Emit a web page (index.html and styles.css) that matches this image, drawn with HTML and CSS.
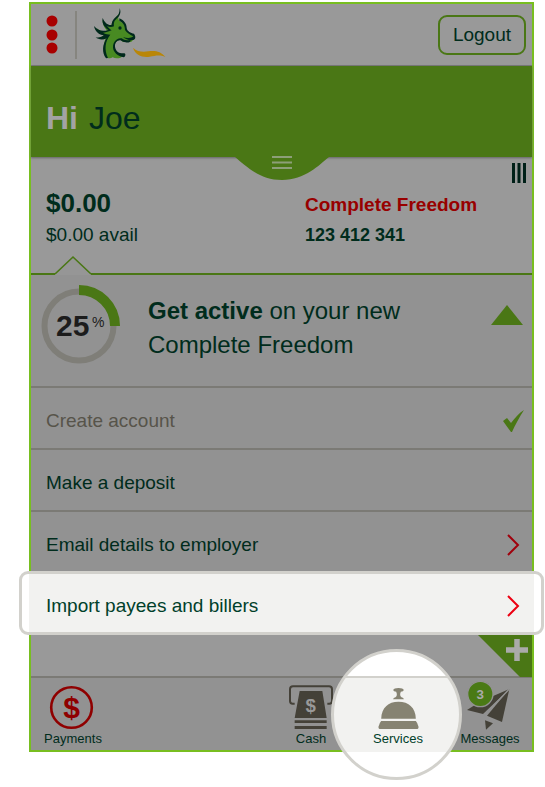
FILE: index.html
```html
<!DOCTYPE html>
<html lang="en">
<head>
    <meta charset="UTF-8">
    <meta name="viewport" content="width=device-width, initial-scale=1.0">
    <title>Complete Freedom</title>
    <link rel="stylesheet" href="styles.css">
</head>
<body>
    <div class="phone">
        <header class="topbar">
            <button class="menu" aria-label="Menu">
                <svg width="12" height="40" viewBox="0 0 12 40">
                    <circle cx="6" cy="6" r="5.5"/>
                    <circle cx="6" cy="20" r="5.5"/>
                    <circle cx="6" cy="33" r="5.5"/>
                </svg>
            </button>
            <svg class="logo" width="75" height="61" viewBox="21 12 225 183">
                <path fill="#488a22" d="M60 170 C54 150 55 132 61 117 C52 118 45 117 41 114 C48 112 53 109 56 106 C44 102 37 94 35 85 C46 94 55 95 66 92 C56 81 52 69 53 59 C61 72 69 77 78 76 C84 64 88 54 102 42 C99 50 99 57 103 63 C113 66 121 77 122 87 C128 96 137 100 146 105 C151 111 149 117 144 119 C142 126 133 128 126 124 C119 129 111 125 107 119 C91 121 85 136 91 151 C95 163 106 169 115 167 C108 175 93 177 83 172 C75 177 67 174 60 170 Z"/>
                <g fill="#00291c">
                    <path d="M63 175 C50 159 52 133 65 115 C52 121 40 119 32 112 C43 114 52 110 57 106 C42 105 30 94 27 78 C38 91 51 96 70 90 C56 80 50 68 53 54 C59 68 69 77 80 75 C80 59 91 53 99 45 C103 40 104 31 104 24 C110 40 103 49 94 57 C86 64 86 73 87 79 C79 82 72 81 66 78 C73 86 77 89 80 91 C68 96 61 98 54 98 C62 103 69 103 76 104 C60 124 57 149 69 174 Z"/>
                    <path d="M116 172 C90 167 79 148 86 130 C91 118 101 114 110 115 C117 121 128 122 137 119 C137 126 130 129 122 127 C115 127 110 123 106 121 C95 120 89 130 90 140 C92 153 101 161 118 160 C123 161 122 170 116 172 Z"/>
                    <path d="M103 55 C115 60 125 70 125 83 C126 94 138 99 147 101 C154 111 151 120 142 120 C134 122 121 118 114 111 C126 115 138 115 145 109 C137 106 125 98 120 90 C120 77 114 66 103 63 Z"/>
                    <circle cx="105" cy="84" r="5"/>
                </g>
                <path fill="#b98608" d="M144 143 C157 156 174 156 190 154 C210 151 228 154 241 171 C225 163 211 167 194 170 C172 173 151 166 144 143 Z"/>
            </svg>
            <button class="logout">Logout</button>
        </header>

        <section class="greeting">
            <h1><b>Hi</b> Joe</h1>
            <button class="pull" aria-label="Show more">
                <svg width="94" height="24" viewBox="0 0 94 24">
                    <path class="pull-shape" d="M0 0 C10 8 24 23 47 23 C70 23 84 8 94 0 Z"/>
                    <path class="pull-lines" d="M37 0 h20 M37 5.500 h20 M37 11 h20"/>
                </svg>
            </button>
        </section>

        <section class="account">
            <div class="balance">
                <strong>$0.00</strong>
                <span>$0.00 avail</span>
            </div>
            <div class="details">
                <strong>Complete Freedom</strong>
                <span>123 412 341</span>
            </div>
            <svg class="bars" width="14" height="22" viewBox="0 0 14 22">
                <path d="M1.500 1 V21 M7 1 V21 M12.500 1 V21"/>
            </svg>
            <svg class="notch" width="36" height="19" viewBox="0 0 36 19">
                <path d="M0 18 L18 1 L36 18 V19 H0 Z" fill="#969696"/>
                <path d="M0 18 L18 1 L36 18" fill="none" stroke="#4a7715" stroke-width="1.6"/>
            </svg>
        </section>

        <section class="promo">
            <svg class="progress" width="84" height="84" viewBox="0 0 84 84" role="img" aria-label="25 percent complete">
                <circle cx="42" cy="42" r="34.5" fill="none" stroke="#7f7e78" stroke-width="6"/>
                <path d="M42 6 A36 36 0 0 1 78 42" fill="none" stroke="#4a7715" stroke-width="10"/>
                <text class="progress-num" x="19" y="52">25</text>
                <text class="progress-unit" x="55" y="43">%</text>
            </svg>
            <h2><b>Get active</b> on your new<br>Complete Freedom</h2>
            <svg class="arrow" width="32" height="20" viewBox="0 0 32 20">
                <path d="M16 0 L32 20 H0 Z"/>
            </svg>
        </section>

        <nav class="steps">
            <a href="#" class="step done">Create account
                <svg width="21" height="22" viewBox="0 0 21 22">
                    <path d="M0 11 L4 8 L8 13 C12 8 16 3 21 0 C16 8 12 15 9 22 H8 Z" fill="#4a7715"/>
                </svg>
            </a>
            <a href="#" class="step">Make a deposit</a>
            <a href="#" class="step email">Email details to employer
                <svg class="chevron" width="13" height="22" viewBox="0 0 13 22"><path d="M1 1 L11 11 L1 21"/></svg>
            </a>
        </nav>
        <div class="spotlight">
            <a href="#" class="step">Import payees and billers
                <svg class="chevron" width="13" height="22" viewBox="0 0 13 22"><path d="M1 1 L11 11 L1 21"/></svg>
            </a>
        </div>

        <div class="add-row">
            <button class="add" aria-label="Add">
                <svg width="54" height="42" viewBox="0 0 54 42">
                    <path d="M0 0 H54 V42 H42 Z" fill="#4a7715"/>
                    <path d="M28 15 H50 M39 4 V26" stroke="#aaa" stroke-width="5.500"/>
                </svg>
            </button>
        </div>

        <nav class="tabs">
            <a href="#" class="tab payments">
                <svg width="49" height="45" viewBox="0 0 49 45">
                    <circle cx="22.5" cy="22.5" r="20.3" fill="none" stroke="#8f0000" stroke-width="2.600"/>
                    <text x="22.5" y="33" class="dollar">$</text>
                </svg>
                Payments
            </a>
            <a href="#" class="tab cash">
                <svg width="45" height="45" viewBox="27 45 135 135">
                    <path d="M44 101 H38 Q30 101 30 93 V58 Q30 49 39 49 H147 Q156 49 156 58 V93 Q156 101 148 101 H142" fill="none" stroke="#444138" stroke-width="6"/>
                    <path d="M59 63 H127 L140 144 H44 Z M44 151 H140 V159 H44 Z M44 168 H140 V177 H44 Z" fill="#444138"/>
                    <text x="92" y="127" class="note-dollar">$</text>
                </svg>
                Cash
            </a>
            <a href="#" class="tab services">
                <svg width="45" height="45" viewBox="13.5 30 135 135">
                    <g fill="#868372">
                        <path d="M65 45 Q67 39 81 39 Q95 39 97 45 Q96 50 88 50 Q83 61 90 67 Q97 68 97 73 H65 Q65 68 72 67 Q79 61 74 50 Q66 50 65 45 Z"/>
                        <path d="M29 131 C30 98 50 80 81 80 C112 80 132 98 133 131 Z"/>
                        <path d="M29 138 H133 Q138 143 141 155 Q142 162 135 162 H27 Q20 162 21 155 Q24 143 29 138 Z"/>
                    </g>
                </svg>
                Services
            </a>
            <a href="#" class="tab messages">
                <svg width="50" height="45" viewBox="30 165 150 135">
                    <g fill="#444138">
                        <path d="M36 240 L75 215 L163 177 L84 252 Z"/>
                        <path d="M163 177 L141 276 L96 257 Z"/>
                        <path d="M90 271 L114 280 L93 299 Z"/>
                    </g>
                    <path d="M163 177 L88 256" stroke="#929292" stroke-width="4"/>
                    <circle cx="76" cy="192" r="38" fill="#4a7a15" stroke="#929292" stroke-width="4"/>
                    <text x="76" y="206" class="count">3</text>
                </svg>
                Messages
            </a>
        </nav>
    </div>
</body>
</html>
```

FILE: styles.css
```css
*, *::before {
    box-sizing: border-box;
}
body {
    margin: 0;
    padding: 2px 11px 30px 29px;
    background: white;
    font-family: "Liberation Sans", Arial, sans-serif;
    font-size: 19px;
    color: #002c1c;
}
button {
    font: inherit;
    color: inherit;
    background: none;
    border: none;
    padding: 0;
    cursor: pointer;
}
a {
    color: inherit;
    text-decoration: none;
}
svg {
    display: block;
    flex-shrink: 0;
    overflow: visible;
}
.phone {
    border: 2px solid #78be20;
    background: #999;
}

/* header */
.topbar {
    display: flex;
    align-items: center;
    height: 62px;
    padding: 0 6px 0 15px;
    border-bottom: 1px solid #777;
}
.menu {
    padding: 4px 17px 4px 0;
    border-right: 2px solid #86857f;
}
.menu svg {
    fill: #a80000;
}
.logo {
    margin-left: 15px;
}
.logout {
    margin-left: auto;
    padding: 0 13px;
    height: 40px;
    border: 2px solid #4a7715;
    border-radius: 9px;
}
.greeting {
    position: relative;
    padding: 34px 15px 20px;
    background: #4a7715;
    box-shadow: 0 1px 2px #666;
}
h1 {
    margin: 0;
    font-size: 32px;
    line-height: 37px;
    font-weight: normal;
}
h1 b {
    color: #a3a3a3;
    margin-right: 2px;
}
.pull {
    position: absolute;
    top: 100%;
    left: 50%;
    transform: translateX(-50%);
}
.pull-shape {
    fill: #4a7715;
}
.pull-lines {
    stroke: #8d9f78;
    stroke-width: 2;
}

/* account */
.account {
    position: relative;
    display: grid;
    grid-template-columns: 259px 1fr auto;
    height: 118px;
    padding: 5px 6px 0 15px;
    border-bottom: 2px solid #4a7715;
}
.balance, .details {
    display: flex;
    flex-direction: column;
    padding-top: 24px;
}
.balance strong {
    font-size: 26px;
    line-height: 34px;
}
.balance span {
    line-height: 30px;
}
.details strong {
    color: #980000;
    line-height: 38px;
}
.details span {
    font-size: 18px;
    font-weight: bold;
    line-height: 22px;
}
.bars {
    stroke: #002018;
    stroke-width: 3;
}
.notch {
    position: absolute;
    left: 24px;
    bottom: -2px;
}

/* progress panel */
.promo {
    display: flex;
    align-items: flex-start;
    height: 113px;
    padding: 9px 9px 0;
    background: #929292;
    border-bottom: 2px solid #7b7a75;
}
.progress {
    margin-left: -3px;
}
.progress-num {
    font-size: 30px;
    font-weight: bold;
    fill: #1c1c1c;
}
.progress-unit {
    font-size: 14px;
    fill: #1c1c1c;
}
h2 {
    flex: 1;
    margin: 10px 0 0 27px;
    font-size: 24px;
    line-height: 34px;
    font-weight: normal;
}
.arrow {
    margin-top: 21px;
    fill: #4a7715;
}

/* steps */
.steps {
    background: #929292;
}
.step {
    display: flex;
    align-items: center;
    justify-content: space-between;
    height: 62px;
    padding: 5px 8px 0 15px;
    border-bottom: 2px solid #7b7a75;
}
.done {
    color: #57544a;
}
.chevron {
    fill: none;
    stroke: #a0000c;
    stroke-width: 2;
}
.step .chevron {
    margin-right: 4px;
}
.spotlight {
    position: relative;
    margin: -3px -12px 0;
    padding: 0 7px;
    border: 3px solid #d2d1cc;
    border-radius: 9px;
    background: white;
}
.spotlight .step {
    height: 58px;
    padding: 5px 10px 0 17px;
    background: #f2f2f0;
    border: none;
    color: #00402a;
}
.spotlight .chevron {
    stroke: #ec0012;
}
.add-row {
    display: flex;
    justify-content: flex-end;
    height: 41px;
}

/* tab bar */
.tabs {
    display: flex;
    height: 74px;
    background: #929292;
    border-top: 2px solid #7b7a75;
}
.tab {
    position: relative;
    display: flex;
    flex-direction: column;
    align-items: center;
    gap: 1px;
    width: 84px;
    padding-top: 7px;
    font-size: 13px;
    line-height: 16px;
}
.tab svg {
    position: relative;
}
.payments {
    margin-right: auto;
}
.cash {
    width: 74px;
}
.services {
    width: 100px;
    color: #00402a;
    z-index: 1;
}
.messages {
    z-index: 2;
}
/* magnifier behind the active tab */
.services::before {
    content: "";
    position: absolute;
    z-index: -1;
    top: -29px;
    left: 50%;
    width: 131px;
    height: 131px;
    margin-left: -67px;
    border: 3px solid #d2d1cc;
    border-radius: 50%;
    background: linear-gradient(white 24px, #d2d1cc 24px, #d2d1cc 26px, #f2f2f0 26px, #f2f2f0 100px, white 100px);
}
.dollar {
    font-size: 30px;
    font-weight: bold;
    fill: #8f0000;
    text-anchor: middle;
}
.note-dollar {
    font-size: 56px;
    font-weight: bold;
    fill: #999;
    text-anchor: middle;
}
.count {
    font-size: 40px;
    font-weight: bold;
    fill: #aaa;
    text-anchor: middle;
}
```
